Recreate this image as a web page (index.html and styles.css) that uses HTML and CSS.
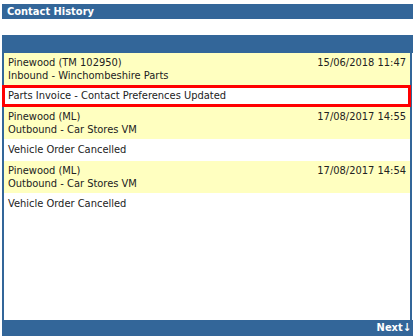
FILE: index.html
```html
<!DOCTYPE html>
<html lang="en">
<head>
    <meta charset="UTF-8">
    <title>Contact History</title>
    <link rel="stylesheet" href="styles.css">
</head>
<body>
    <div class="widget">
        <div class="title">Contact History</div>

        <div class="panel">
            <div class="panel-head"></div>

            <ul class="history">
                <li class="entry">
                    <div class="entry-top">
                        <span>Pinewood (TM 102950)</span>
                        <span class="date">15/06/2018 11:47</span>
                    </div>
                    <div>Inbound - Winchombeshire Parts</div>
                </li>
                <li class="note selected">Parts Invoice - Contact Preferences Updated</li>

                <li class="entry">
                    <div class="entry-top">
                        <span>Pinewood (ML)</span>
                        <span class="date">17/08/2017 14:55</span>
                    </div>
                    <div>Outbound - Car Stores VM</div>
                </li>
                <li class="note">Vehicle Order Cancelled</li>

                <li class="entry">
                    <div class="entry-top">
                        <span>Pinewood (ML)</span>
                        <span class="date">17/08/2017 14:54</span>
                    </div>
                    <div>Outbound - Car Stores VM</div>
                </li>
                <li class="note">Vehicle Order Cancelled</li>
            </ul>

            <div class="panel-foot">
                <a class="next" href="#">Next&#8595;</a>
            </div>
        </div>
    </div>
</body>
</html>
```

FILE: styles.css
```css
body {
    margin: 0;
    font-family: "DejaVu Sans Condensed", "Liberation Sans", sans-serif;
    font-size: 11px;
    color: #222;
    background: #fff;
}
.widget {
    padding-top: 4px;
    padding-left: 2px;
}
.title {
    background: #336699;
    color: #fff;
    font-weight: bold;
    height: 15px;
    line-height: 15px;
    padding-left: 5px;
}
.panel {
    margin-top: 16px;
    height: 301px;
    display: flex;
    flex-direction: column;
    border-left: 2px solid #336699;
    border-right: 2px solid #336699;
    margin-right: 1px;
}
.panel-head {
    background: #336699;
    height: 18px;
    margin-left: -2px;
    margin-right: -3px;
}
.history {
    list-style: none;
    margin: 0;
    padding: 0;
    flex: 1;
}
.entry {
    background: #ffffc0;
    padding: 3px 4px 3px 4px;
    line-height: 13px;
}
.entry-top {
    display: flex;
    justify-content: space-between;
}
.note {
    padding: 0 4px;
    height: 22px;
    line-height: 21px;
}
/* aktuell markierter Eintrag */
.selected {
    border: 3px solid #ff0000;
    height: 16px;
    line-height: 16px;
    margin-left: -2px;
    margin-right: -1px;
    padding-left: 3px;
}
.panel-foot {
    background: #336699;
    height: 16px;
    line-height: 16px;
    text-align: right;
    margin-left: -2px;
    margin-right: -3px;
    padding-right: 2px;
}
.next {
    color: #fff;
    font-weight: bold;
    text-decoration: none;
}
```
